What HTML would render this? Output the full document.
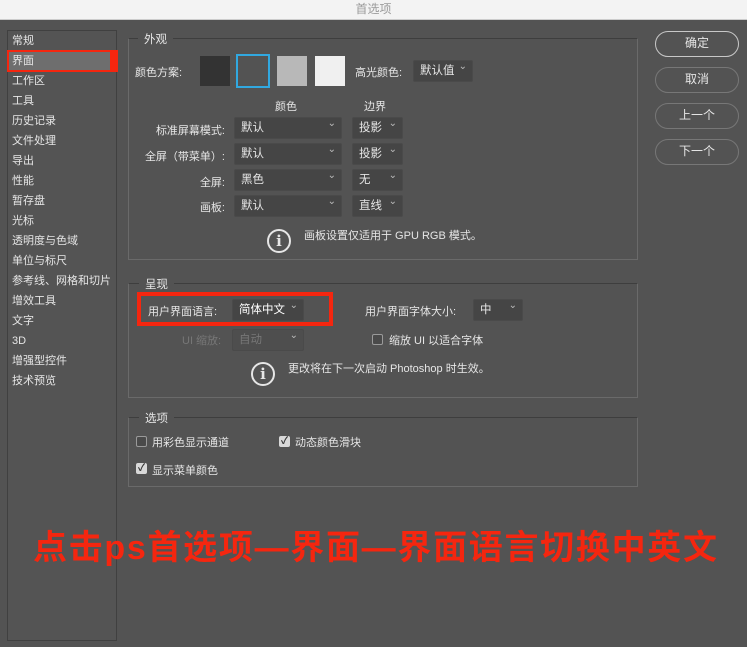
<!DOCTYPE html><html><head><meta charset="utf-8"><style>
*{box-sizing:border-box;margin:0;padding:0}
body{width:747px;height:647px;background:#535353;font-family:"Liberation Sans","Noto Sans CJK SC",sans-serif;color:#e6e6e6;font-size:11px;position:relative;overflow:hidden}
.a{position:absolute;white-space:nowrap}
.title{left:0;top:0;width:747px;height:20px;background:#f3f3f3;color:#9a9a9a;text-align:center;line-height:19px;font-size:12px;border-bottom:1px solid #ccc}
.side{left:7px;top:30px;width:110px;height:611px;border:1px solid #404040;background:#545454}
.side div{height:20px;line-height:20px;padding-left:4px}
.grp{border:1px solid #6a6a6a;border-top-color:#3e3e3e}
.gl{background:#535353;padding:0 6px;font-size:11.5px}
.sel{height:22px;background:#454545;border:1px solid #4a4a4a;border-radius:2px;line-height:20px;padding-left:6px;font-size:11.5px}
.sel:after{content:"⌄";position:absolute;right:5px;top:-4px;font-size:10px;color:#bbb}
.r{text-align:right}
.btn{left:655px;width:84px;height:26px;border:1.5px solid #8a8a8a;border-radius:13px;text-align:center;line-height:23px;font-size:12px}
.cb{width:11px;height:11px;border:1px solid #9a9a9a;border-radius:2px;background:#4a4a4a}
.cbk{background:#d8d8d8;border-color:#d8d8d8;color:#333;font-size:10px;line-height:10px;text-align:center;font-weight:bold}
.info{width:24px;height:24px;border:2px solid #e6e6e6;border-radius:50%;text-align:center;line-height:20px;font-size:15px;font-weight:bold;font-family:"DejaVu Serif",serif}
</style></head><body>
<div class="a title">首选项</div>
<div class="a side">
<div>常规</div><div style="background:#6e6e6e;border-right:7px solid #f5260f;outline:2px solid #f5260f;outline-offset:-1px;width:109px">界面</div><div>工作区</div><div>工具</div><div>历史记录</div><div>文件处理</div><div>导出</div><div>性能</div><div>暂存盘</div><div>光标</div><div>透明度与色域</div><div>单位与标尺</div><div>参考线、网格和切片</div><div>增效工具</div><div>文字</div><div>3D</div><div>增强型控件</div><div>技术预览</div>
</div>

<div class="a grp" style="left:128px;top:38px;width:510px;height:222px"></div>
<div class="a gl" style="left:138px;top:31px">外观</div>
<div class="a" style="left:135px;top:64px">颜色方案:</div>
<div class="a" style="left:200px;top:56px;width:30px;height:30px;background:#333"></div>
<div class="a" style="left:236px;top:54px;width:34px;height:34px;border:2px solid #31a8e0;background:#535353"></div>
<div class="a" style="left:277px;top:56px;width:30px;height:30px;background:#b8b8b8"></div>
<div class="a" style="left:315px;top:56px;width:30px;height:30px;background:#f0f0f0"></div>
<div class="a" style="left:355px;top:64px">高光颜色:</div>
<div class="a sel" style="left:413px;top:60px;width:60px">默认值</div>
<div class="a" style="left:275px;top:98px">颜色</div>
<div class="a" style="left:364px;top:98px">边界</div>
<div class="a r" style="left:120px;width:105px;top:122px">标准屏幕模式:</div>
<div class="a r" style="left:120px;width:105px;top:148px">全屏（带菜单）:</div>
<div class="a r" style="left:120px;width:105px;top:174px">全屏:</div>
<div class="a r" style="left:120px;width:105px;top:199px">画板:</div>
<div class="a sel" style="left:234px;top:117px;width:108px">默认</div>
<div class="a sel" style="left:234px;top:143px;width:108px">默认</div>
<div class="a sel" style="left:234px;top:169px;width:108px">黑色</div>
<div class="a sel" style="left:234px;top:195px;width:108px">默认</div>
<div class="a sel" style="left:352px;top:117px;width:51px">投影</div>
<div class="a sel" style="left:352px;top:143px;width:51px">投影</div>
<div class="a sel" style="left:352px;top:169px;width:51px">无</div>
<div class="a sel" style="left:352px;top:195px;width:51px">直线</div>
<div class="a info" style="left:267px;top:229px">i</div>
<div class="a" style="left:304px;top:227px">画板设置仅适用于 GPU RGB 模式。</div>

<div class="a grp" style="left:128px;top:283px;width:510px;height:115px"></div>
<div class="a gl" style="left:139px;top:276px">呈现</div>
<div class="a" style="left:137px;top:292px;width:196px;height:34px;border:4px solid #f5260f"></div>
<div class="a" style="left:148px;top:303px">用户界面语言:</div>
<div class="a sel" style="left:232px;top:299px;width:72px;color:#fff">简体中文</div>
<div class="a" style="left:365px;top:303px">用户界面字体大小:</div>
<div class="a sel" style="left:473px;top:299px;width:50px">中</div>
<div class="a" style="left:182px;top:332px;color:#777">UI 缩放:</div>
<div class="a sel" style="left:232px;top:329px;width:72px;color:#777;background:#4e4e4e">自动</div>
<div class="a cb" style="left:372px;top:334px"></div>
<div class="a" style="left:389px;top:332px">缩放 UI 以适合字体</div>
<div class="a info" style="left:251px;top:362px">i</div>
<div class="a" style="left:288px;top:360px">更改将在下一次启动 Photoshop 时生效。</div>

<div class="a grp" style="left:128px;top:417px;width:510px;height:70px"></div>
<div class="a gl" style="left:139px;top:410px">选项</div>
<div class="a cb" style="left:136px;top:436px"></div>
<div class="a" style="left:152px;top:434px">用彩色显示通道</div>
<div class="a cb cbk" style="left:279px;top:436px">✓</div>
<div class="a" style="left:295px;top:434px">动态颜色滑块</div>
<div class="a cb cbk" style="left:136px;top:463px">✓</div>
<div class="a" style="left:152px;top:462px">显示菜单颜色</div>

<div class="a btn" style="top:31px;border-color:#c8c8c8">确定</div>
<div class="a btn" style="top:67px;border-color:#777">取消</div>
<div class="a btn" style="top:103px;border-color:#777">上一个</div>
<div class="a btn" style="top:139px;border-color:#777">下一个</div>

<div class="a" style="left:33px;top:527px;color:#f5260f;font-size:34px;font-weight:bold;letter-spacing:1.7px;line-height:42px">点击ps首选项—界面—界面语言切换中英文</div>
</body></html>
